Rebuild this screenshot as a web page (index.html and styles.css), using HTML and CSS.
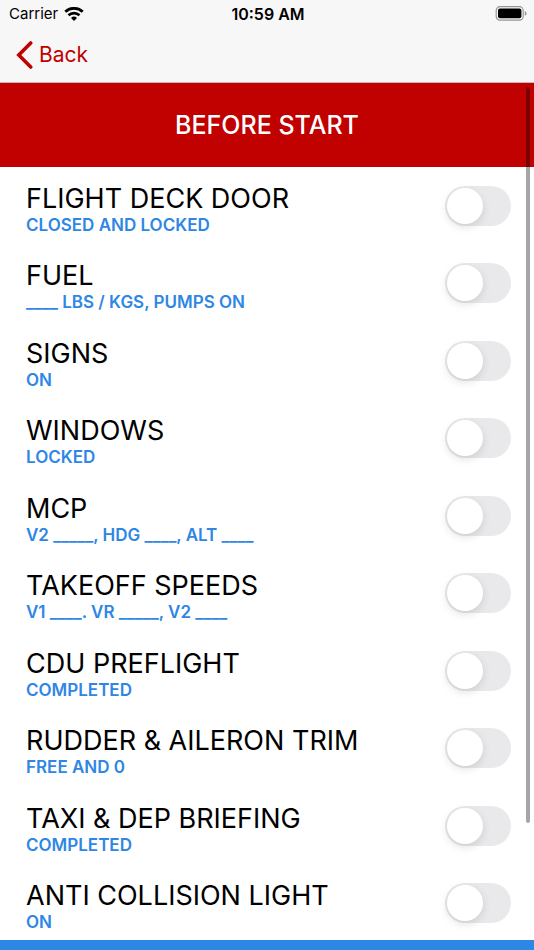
FILE: index.html
```html
<!DOCTYPE html>
<html lang="en">
<head>
<meta charset="utf-8">
<meta name="viewport" content="width=device-width">
<title>Before Start</title>
<link rel="stylesheet" href="styles.css">
</head>
<body>
<header class="top">
  <div class="status">
    <div class="carrier"><span>Carrier</span>
      <svg width="20" height="14" viewBox="0 0 20 14" aria-hidden="true"><path d="M1.3 4.8a12.6 12.6 0 0 1 17.4 0M4.5 8.3a8 8 0 0 1 11 0" fill="none" stroke="#000" stroke-width="2.7"/><path d="M10 14 7 11a4.3 4.3 0 0 1 6 0z"/></svg>
    </div>
    <time class="clock">10:59 AM</time>
    <svg class="battery" width="32" height="16" viewBox="0 0 32 16" aria-hidden="true"><rect x="1.2" y=".7" width="27" height="13.4" rx="3.8" fill="none" stroke="#959595" stroke-width="1.2"/><rect x="3" y="2.5" width="23.4" height="9.8" rx="2"/><path d="M29.8 5.1q1.8.7 1.8 2.3t-1.8 2.3z" fill="#959595"/></svg>
  </div>
  <nav class="nav"><a class="back" href="#"><svg width="18" height="28" viewBox="0 0 18 28" aria-hidden="true"><path d="M15.7 2 3.8 14l11.9 12" fill="none" stroke="currentColor" stroke-width="3.6" stroke-linecap="round"/></svg>Back</a></nav>
</header>
<main class="page">
  <h1 class="title">BEFORE START</h1>
  <ul class="list">
    <li class="row"><label for="s1"><span class="name">FLIGHT DECK DOOR</span><span class="note">CLOSED AND LOCKED</span></label><input class="switch" type="checkbox" role="switch" id="s1"></li>
    <li class="row"><label for="s2"><span class="name">FUEL</span><span class="note">____ LBS / KGS, PUMPS ON</span></label><input class="switch" type="checkbox" role="switch" id="s2"></li>
    <li class="row"><label for="s3"><span class="name">SIGNS</span><span class="note">ON</span></label><input class="switch" type="checkbox" role="switch" id="s3"></li>
    <li class="row"><label for="s4"><span class="name">WINDOWS</span><span class="note">LOCKED</span></label><input class="switch" type="checkbox" role="switch" id="s4"></li>
    <li class="row"><label for="s5"><span class="name">MCP</span><span class="note">V2 _____, HDG ____, ALT ____</span></label><input class="switch" type="checkbox" role="switch" id="s5"></li>
    <li class="row"><label for="s6"><span class="name">TAKEOFF SPEEDS</span><span class="note">V1 ____. VR _____, V2 ____</span></label><input class="switch" type="checkbox" role="switch" id="s6"></li>
    <li class="row"><label for="s7"><span class="name">CDU PREFLIGHT</span><span class="note">COMPLETED</span></label><input class="switch" type="checkbox" role="switch" id="s7"></li>
    <li class="row"><label for="s8"><span class="name">RUDDER &amp; AILERON TRIM</span><span class="note">FREE AND 0</span></label><input class="switch" type="checkbox" role="switch" id="s8"></li>
    <li class="row"><label for="s9"><span class="name">TAXI &amp; DEP BRIEFING</span><span class="note">COMPLETED</span></label><input class="switch" type="checkbox" role="switch" id="s9"></li>
    <li class="row"><label for="s10"><span class="name">ANTI COLLISION LIGHT</span><span class="note">ON</span></label><input class="switch" type="checkbox" role="switch" id="s10"></li>
  </ul>
  <div class="scrollbar"></div>
</main>
<footer class="bottom"></footer>
</body>
</html>
```
FILE: styles.css
```css
* { box-sizing: border-box; }
html, body { height: 100%; }
body { margin: 0; display: flex; flex-direction: column; overflow: hidden; background: #fff; color: #000; font-family: Inter, "Liberation Sans", sans-serif; }
.top { flex: none; background: #f7f7f7; border-bottom: 1px solid #c4b8b8; }
.status { display: grid; grid-template-columns: 1fr auto 1fr; align-items: center; height: 27px; padding: 0 7px 0 9px; font-size: 15px; }
.carrier { display: flex; align-items: center; gap: 6px; }
.clock { font-size: 16px; font-weight: 600; }
.battery { justify-self: end; }
.nav { display: flex; align-items: center; height: 55px; padding: 0 15px; }
.back { display: flex; align-items: center; gap: 6px; color: #c10000; font-size: 21px; text-decoration: none; }
.page { position: relative; flex: 1; min-height: 0; overflow: hidden; }
.title { display: flex; align-items: center; justify-content: center; height: 84px; margin: 0; background: #c10000; color: #fff; font-size: 25px; font-weight: 500; }
.list { margin: 0; padding: 0; list-style: none; }
.row { display: flex; align-items: center; justify-content: space-between; min-height: 77px; padding: 0 23px 0 26px; }
.row:nth-child(even) { min-height: 78px; }
.row label { padding-top: 6px; }
.name, .note { display: block; }
.name { font-size: 27px; font-weight: 400; line-height: 32px; }
.note { color: #2e86e5; font-size: 17px; font-weight: 600; line-height: 20px; }
.switch { appearance: none; flex: none; width: 66px; height: 40px; margin: 0; padding: 2px; border-radius: 20px; background: #e9e9eb; }
.switch::before { content: ""; display: block; width: 36px; height: 36px; border-radius: 50%; background: #fff; box-shadow: 0 3px 8px rgba(0, 0, 0, .12); }
.switch:checked { background: #34c759; }
.switch:checked::before { margin-left: auto; }
.scrollbar { position: absolute; top: 4px; right: 4px; bottom: 117px; width: 4px; border-radius: 2px; background: rgba(0, 0, 0, .35); }
.bottom { flex: none; height: 10px; background: #2e86e5; }
```
